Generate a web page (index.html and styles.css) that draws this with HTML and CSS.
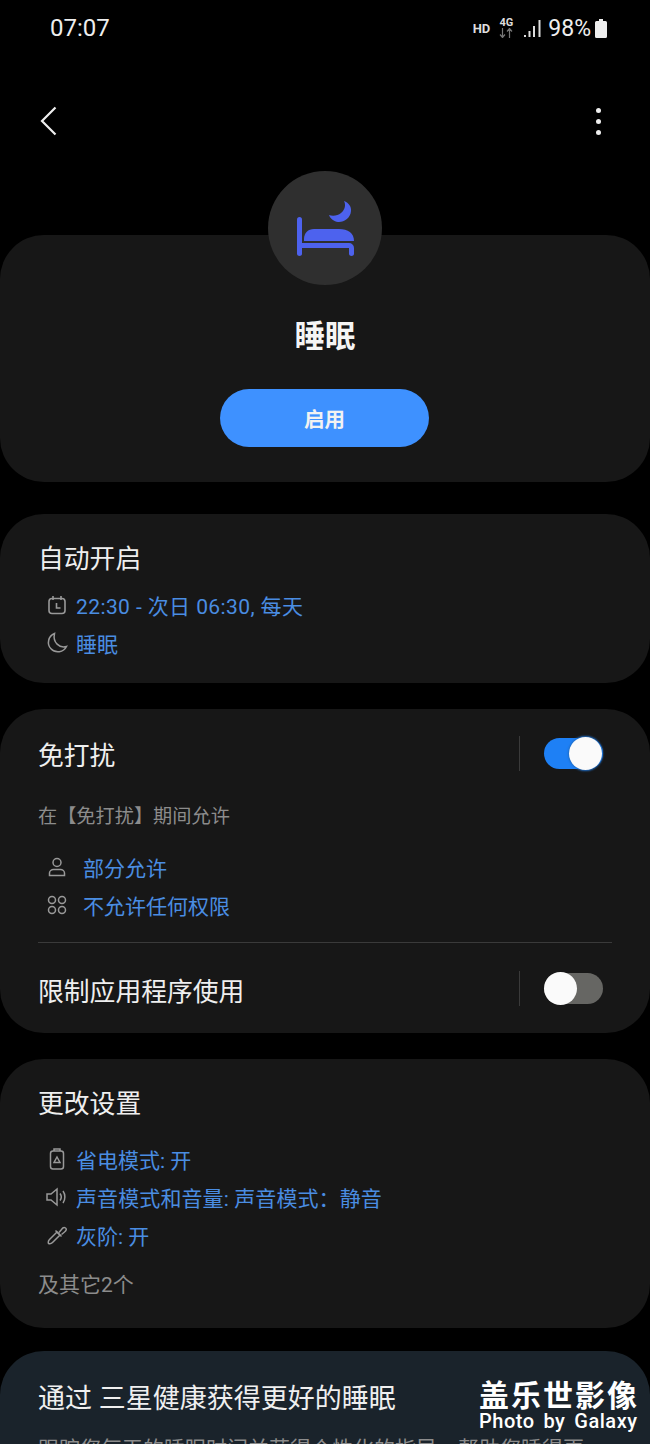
FILE: index.html
```html
<!DOCTYPE html>
<html>
<head>
    <title>睡眠</title>
    <meta name="viewport" content="width=device-width, initial-scale=1">
    <link rel="stylesheet" href="styles.css">
</head>
<body>
    <div class="screen">
        <div class="status-bar">
            <span class="time">07:07</span>
            <div class="status-icons">
                <span class="hd">HD</span>
                <span class="net"><span>4G</span><svg width="14" height="10" viewBox="0 0 14 10"><path d="M3.500 0v9M1 6.500l2.500 3 2.500-3M10.500 10V1M8 3.500l2.500-3 2.500 3" fill="none" stroke="#777" stroke-width="1.200"/></svg></span>
                <svg width="17" height="17" viewBox="0 0 17 17"><path d="M0 15h2v2H0zM4.500 11h2v6h-2zM9 6h2v11H9zM14.500 0h2v17h-2z" fill="#ddd"/></svg>
                <span class="battery-text">98%</span>
                <svg width="12" height="19" viewBox="0 0 12 19"><path d="M4 0h4v2h2.500A1.500 1.500 0 0 1 12 3.500V17.500A1.500 1.500 0 0 1 10.500 19h-9A1.500 1.500 0 0 1 0 17.500V3.500A1.500 1.500 0 0 1 1.500 2H4z" fill="#eee"/></svg>
            </div>
        </div>

        <div class="top-nav">
            <svg width="18" height="30" viewBox="0 0 18 30"><path d="M15.500 1.500L2 15l13.500 13.500" fill="none" stroke="#eee" stroke-width="2.200"/></svg>
            <div class="more"><i></i><i></i><i></i></div>
        </div>

        <section class="card hero">
            <div class="hero-icon">
                <svg width="57" height="55" viewBox="0 0 57 55" fill="#4d62ee">
                    <path d="M47 0C52 2 54.500 6 54 10C53.500 17 47 21.500 41 21C37 20.500 33.500 18 32 14C36 15.500 41 14.500 44 12C48 8.500 49 4 47 0z"/>
                    <rect x="0" y="16" width="5" height="39" rx="2.500"/>
                    <path d="M7 40v-2c0-6 4-10 10-10h25c9 0 15 4 15 12z"/>
                    <path d="M5 42h47a5 5 0 0 1 5 5v5.500a2.500 2.500 0 0 1-5 0V47H5z"/>
                </svg>
            </div>
            <h1>睡眠</h1>
            <button class="enable-btn">启用</button>
        </section>

        <section class="card auto-card">
            <h2>自动开启</h2>
            <div class="info-row first">
                <span class="row-icon"><svg width="20" height="20" viewBox="0 0 20 20"><g fill="none" stroke="#999" stroke-width="1.600"><rect x="2" y="3.500" width="16" height="15" rx="3"/><path d="M6 1v4M14 1v4M9.500 8v5h4"/></g></svg></span>
                <span class="time-range">22:30 - 次日 06:30, 每天</span>
            </div>
            <div class="info-row">
                <span class="row-icon"><svg width="22" height="22" viewBox="0 0 22 22"><path d="M8.500 1.500a9.500 9.500 0 1 0 12 13c-7 2-14-4-12-13z" fill="none" stroke="#999" stroke-width="1.500"/></svg></span>
                <span>睡眠</span>
            </div>
        </section>

        <section class="card dnd-card">
            <div class="toggle-row">
                <h2>免打扰</h2>
                <div class="toggle-wrap">
                    <span class="divider"></span>
                    <span class="switch on"><i></i></span>
                </div>
            </div>
            <p class="note">在【免打扰】期间允许</p>
            <div class="info-row wide">
                <span class="row-icon"><svg width="20" height="20" viewBox="0 0 20 20"><g fill="none" stroke="#999" stroke-width="1.500"><circle cx="10" cy="5.500" r="4"/><path d="M2.500 18.500v-2.500c0-2 2-3.500 4-3.500h7c2 0 4 1.500 4 3.500v2.500z"/></g></svg></span>
                <span>部分允许</span>
            </div>
            <div class="info-row wide">
                <span class="row-icon"><svg width="20" height="20" viewBox="0 0 20 20"><g fill="none" stroke="#999" stroke-width="1.500"><circle cx="5" cy="5" r="3.500"/><circle cx="15" cy="5" r="3.500"/><circle cx="5" cy="15" r="3.500"/><circle cx="15" cy="15" r="3.500"/></g></svg></span>
                <span>不允许任何权限</span>
            </div>
            <div class="rule"></div>
            <div class="toggle-row limit">
                <h2>限制应用程序使用</h2>
                <div class="toggle-wrap">
                    <span class="divider"></span>
                    <span class="switch"><i></i></span>
                </div>
            </div>
        </section>

        <section class="card change-card">
            <h2>更改设置</h2>
            <div class="info-row first">
                <span class="row-icon"><svg width="16" height="22" viewBox="0 0 16 22"><g fill="none" stroke="#999" stroke-width="1.500"><rect x="1.500" y="3" width="13" height="18" rx="2.500"/><path d="M5 3V1h6v2M8 9l3 5.500H5z"/></g></svg></span>
                <span>省电模式: 开</span>
            </div>
            <div class="info-row">
                <span class="row-icon"><svg width="22" height="20" viewBox="0 0 22 20"><g fill="none" stroke="#999" stroke-width="1.500"><path d="M1 7v6h4l6 5V2L5 7z"/><path d="M14 6.500c1.500 2 1.500 5 0 7M17 4c2.500 3.500 2.500 8.500 0 12"/></g></svg></span>
                <span class="sound-text">声音模式和音量: 声音模式：静音</span>
            </div>
            <div class="info-row">
                <span class="row-icon"><svg width="20" height="20" viewBox="0 0 20 20"><g fill="none" stroke="#999" stroke-width="1.500"><path d="M1.500 18.500c-.5-1.500 0-3 1-4l7.500-7.500 3 3-7.500 7.500c-1 1-2.500 1.500-4 1z"/><path d="M8.500 5.500l6 6M12 7.500l2.500-3c1-1.500 2.500-2.500 4-1.500s.5 3-1 4l-3 2.500"/></g></svg></span>
                <span>灰阶: 开</span>
            </div>
            <p class="more-note">及其它2个</p>
        </section>

        <section class="card health-card">
            <h2>通过 三星健康获得更好的睡眠</h2>
            <p>跟踪您每天的睡眠时间并获得个性化的指导，帮助您睡得更</p>
        </section>

        <div class="watermark">
            <strong>盖乐世影像</strong>
            <span>Photo by Galaxy</span>
        </div>
    </div>
</body>
</html>
```

FILE: styles.css
```css
* {
    box-sizing: border-box;
}
html, body {
    margin: 0;
    background: #000;
}
body {
    font-family: Roboto, "Noto Sans CJK SC", sans-serif;
    color: #f2f2f2;
}
.screen {
    position: relative;
    width: 650px;
    height: 1444px;
    overflow: hidden;
}
.status-bar {
    height: 56px;
    padding: 0 43px 0 50px;
    display: flex;
    align-items: center;
    justify-content: space-between;
}
.time {
    font-size: 24px;
    color: #eee;
}
.status-icons {
    display: flex;
    align-items: center;
}
.hd {
    font-size: 13px;
    font-weight: 700;
    color: #ddd;
    margin-right: 9px;
}
.net {
    display: flex;
    flex-direction: column;
    align-items: center;
    font-size: 11px;
    line-height: 10px;
    font-weight: 700;
    color: #ddd;
    margin-right: 11px;
}
.battery-text {
    font-size: 23px;
    color: #eee;
    margin: 0 4px 0 7px;
}
.top-nav {
    height: 115px;
    padding: 50px 49px 0 40px;
    display: flex;
    align-items: flex-start;
    justify-content: space-between;
}
.more {
    display: flex;
    flex-direction: column;
    gap: 6px;
    margin-top: 2px;
}
.more i {
    width: 5px;
    height: 5px;
    border-radius: 50%;
    background: #eee;
}
.card {
    background: #171717;
    border-radius: 44px;
}
.hero {
    position: relative;
    height: 247px;
    margin-top: 64px;
    margin-bottom: 32px;
    display: flex;
    flex-direction: column;
    align-items: center;
    padding-top: 82px;
}
.hero-icon {
    position: absolute;
    top: -64px;
    left: 268px;
    width: 114px;
    height: 114px;
    border-radius: 50%;
    background: #2f2f2f;
    display: flex;
    align-items: center;
    justify-content: center;
}
.hero h1 {
    margin: 0;
    font-size: 30.500px;
    line-height: 40px;
    font-weight: 700;
    color: #f5f5f5;
}
.enable-btn {
    margin: 32px 1px 0 0;
    width: 209px;
    height: 58px;
    border: none;
    border-radius: 29px;
    background: #3e91ff;
    color: #f2f2f2;
    font-family: inherit;
    font-size: 20.500px;
    font-weight: 700;
}
h2 {
    margin: 0;
    font-size: 25.800px;
    line-height: 34px;
    font-weight: 400;
    color: #efefef;
}
.auto-card {
    height: 169px;
    margin-bottom: 26px;
    padding: 28px 38px 0;
}
.info-row {
    display: flex;
    align-items: center;
    height: 38px;
    font-size: 21px;
    color: #4a8de2;
}
.info-row.first {
    margin-top: 10px;
}
.time-range {
    letter-spacing: 0.400px;
}
.sound-text {
    letter-spacing: 0.100px;
}
.row-icon {
    flex: none;
    display: flex;
    justify-content: center;
    width: 22px;
    margin-left: 8px;
    margin-right: 8px;
}
.info-row.wide .row-icon {
    margin-right: 15px;
}
.dnd-card {
    height: 324px;
    margin-bottom: 26px;
    padding: 30px 38px 0;
}
.toggle-row {
    display: flex;
    align-items: center;
    justify-content: space-between;
    padding-right: 9px;
}
.toggle-wrap {
    display: flex;
    align-items: center;
    gap: 24px;
    margin-top: -6px;
}
.toggle-row.limit .toggle-wrap {
    margin-top: -8px;
}
.divider {
    width: 1px;
    height: 35px;
    background: #3a3a3a;
}
.switch {
    position: relative;
    display: block;
    width: 59px;
    height: 31px;
    border-radius: 16px;
    background: #666663;
}
.switch.on {
    background: #1e80f5;
}
.switch i {
    position: absolute;
    top: -1px;
    left: 0;
    width: 33px;
    height: 33px;
    border-radius: 50%;
    background: #fafafa;
}
.switch.on i {
    left: auto;
    right: 1px;
    box-shadow: 0 0 2px 1px #1f6cc4;
}
.note {
    margin: 31px 0 18px;
    font-size: 19.200px;
    line-height: 26px;
    color: #8c8c8c;
}
.rule {
    height: 1px;
    background: #3a3a3a;
    margin-top: 18px;
}
.toggle-row.limit {
    margin-top: 32px;
}
.change-card {
    height: 269px;
    margin-bottom: 23px;
    padding: 28px 38px 0;
}
.change-card .info-row.first {
    margin-top: 19px;
}
.more-note {
    margin: 17px 0 0;
    font-size: 21px;
    line-height: 28px;
    color: #8c8c8c;
}
.health-card {
    height: 140px;
    padding: 31px 38px 0;
    background: #1a232b;
}
.health-card h2 {
    font-size: 27px;
}
.health-card p {
    margin: 19px 0 0;
    font-size: 21px;
    line-height: 28px;
    color: #8c8c8c;
    white-space: nowrap;
}
.watermark {
    position: absolute;
    left: 479px;
    top: 1381px;
    display: flex;
    flex-direction: column;
    color: #fff;
}
.watermark strong {
    font-size: 30px;
    line-height: 30px;
    letter-spacing: 2px;
    font-weight: 700;
    white-space: nowrap;
}
.watermark span {
    font-size: 20px;
    line-height: 20px;
    font-weight: 500;
    letter-spacing: 0.500px;
    word-spacing: 3.500px;
    white-space: nowrap;
}
```
